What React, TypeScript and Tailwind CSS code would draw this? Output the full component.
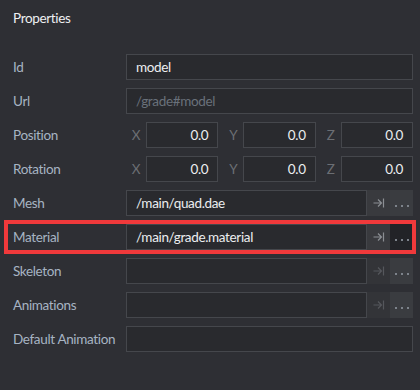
import type { ReactNode } from 'react';

function ArrowBar({ dim }: { dim?: boolean }) {
  return (
    <svg width="12" height="10" viewBox="0 0 12 10" fill="none" className={dim ? 'text-[#55575c]' : 'text-[#8b8e93]'}>
      <path d="M0.5 5H8M5 1.5L8.5 5L5 8.5M10.5 0.5V9.5" stroke="currentColor" strokeWidth="1.2" />
    </svg>
  );
}

function Field({ children, muted, right }: { children?: ReactNode; muted?: boolean; right?: boolean }) {
  return (
    <div
      className={`flex h-[26px] flex-1 min-w-0 items-center border border-[#45474c] bg-[#292a2e] px-[9px] ${
        right ? 'justify-end' : ''
      } ${muted ? 'text-[#69717b]' : 'text-[#eceef0]'}`}
    >
      {children}
    </div>
  );
}

function Row({ label, children }: { label: string; children: ReactNode }) {
  return (
    <div className="flex h-[26px] items-center">
      <div className="w-[126px] shrink-0 whitespace-nowrap pl-[13px] text-[#a7b4c3]">{label}</div>
      <div className="flex flex-1 items-center">{children}</div>
    </div>
  );
}

function Resource({ value, dim, pressed }: { value?: string; dim?: boolean; pressed?: boolean }) {
  return (
    <>
      <Field>{value}</Field>
      <div className={`flex h-[26px] w-[23px] items-center justify-center ${dim ? 'bg-[#333438]' : 'bg-[#393a3e]'}`}>
        <ArrowBar dim={dim} />
      </div>
      <div
        className={`flex h-[26px] w-[23px] items-end justify-center gap-[4px] pb-[9px] ${
          pressed ? 'bg-[#222327]' : 'bg-[#3a3c40]'
        }`}
      >
        <span className="h-[2px] w-[2px] bg-[#7d838b]" />
        <span className="h-[2px] w-[2px] bg-[#7d838b]" />
        <span className="h-[2px] w-[2px] bg-[#7d838b]" />
      </div>
    </>
  );
}

function Vec({ axis }: { axis: string }) {
  return (
    <div className="flex flex-1 items-center">
      <div className="w-[20px] text-center text-[#6b6e73]">{axis}</div>
      <Field right>0.0</Field>
    </div>
  );
}

export default function App() {
  return (
    <div className="h-[390px] w-[420px] bg-[#2e2f34] text-[13.5px] tracking-[-0.35px] font-['Lato',sans-serif]">
      <div className="px-[13px] pt-[7px] text-[#eef0f2] leading-[22px]">Properties</div>
      <div className="mt-[25px] flex flex-col gap-[8px] pr-[7px]">
        <Row label="Id">
          <Field>model</Field>
        </Row>
        <Row label="Url">
          <Field muted>/grade#model</Field>
        </Row>
        <Row label="Position">
          <div className="flex flex-1 gap-[5px]">
            <Vec axis="X" />
            <Vec axis="Y" />
            <Vec axis="Z" />
          </div>
        </Row>
        <Row label="Rotation">
          <div className="flex flex-1 gap-[5px]">
            <Vec axis="X" />
            <Vec axis="Y" />
            <Vec axis="Z" />
          </div>
        </Row>
        <Row label="Mesh">
          <Resource value="/main/quad.dae" />
        </Row>
        <div className="relative">
          <Row label="Material">
            <Resource value="/main/grade.material" pressed />
          </Row>
          <div className="pointer-events-none absolute -top-[4px] -bottom-[4px] left-[4px] right-[-3px] border-[4px] border-[#f0393b]" />
        </div>
        <Row label="Skeleton">
          <Resource dim />
        </Row>
        <Row label="Animations">
          <Resource dim />
        </Row>
        <Row label="Default Animation">
          <Field />
        </Row>
      </div>
    </div>
  );
}
